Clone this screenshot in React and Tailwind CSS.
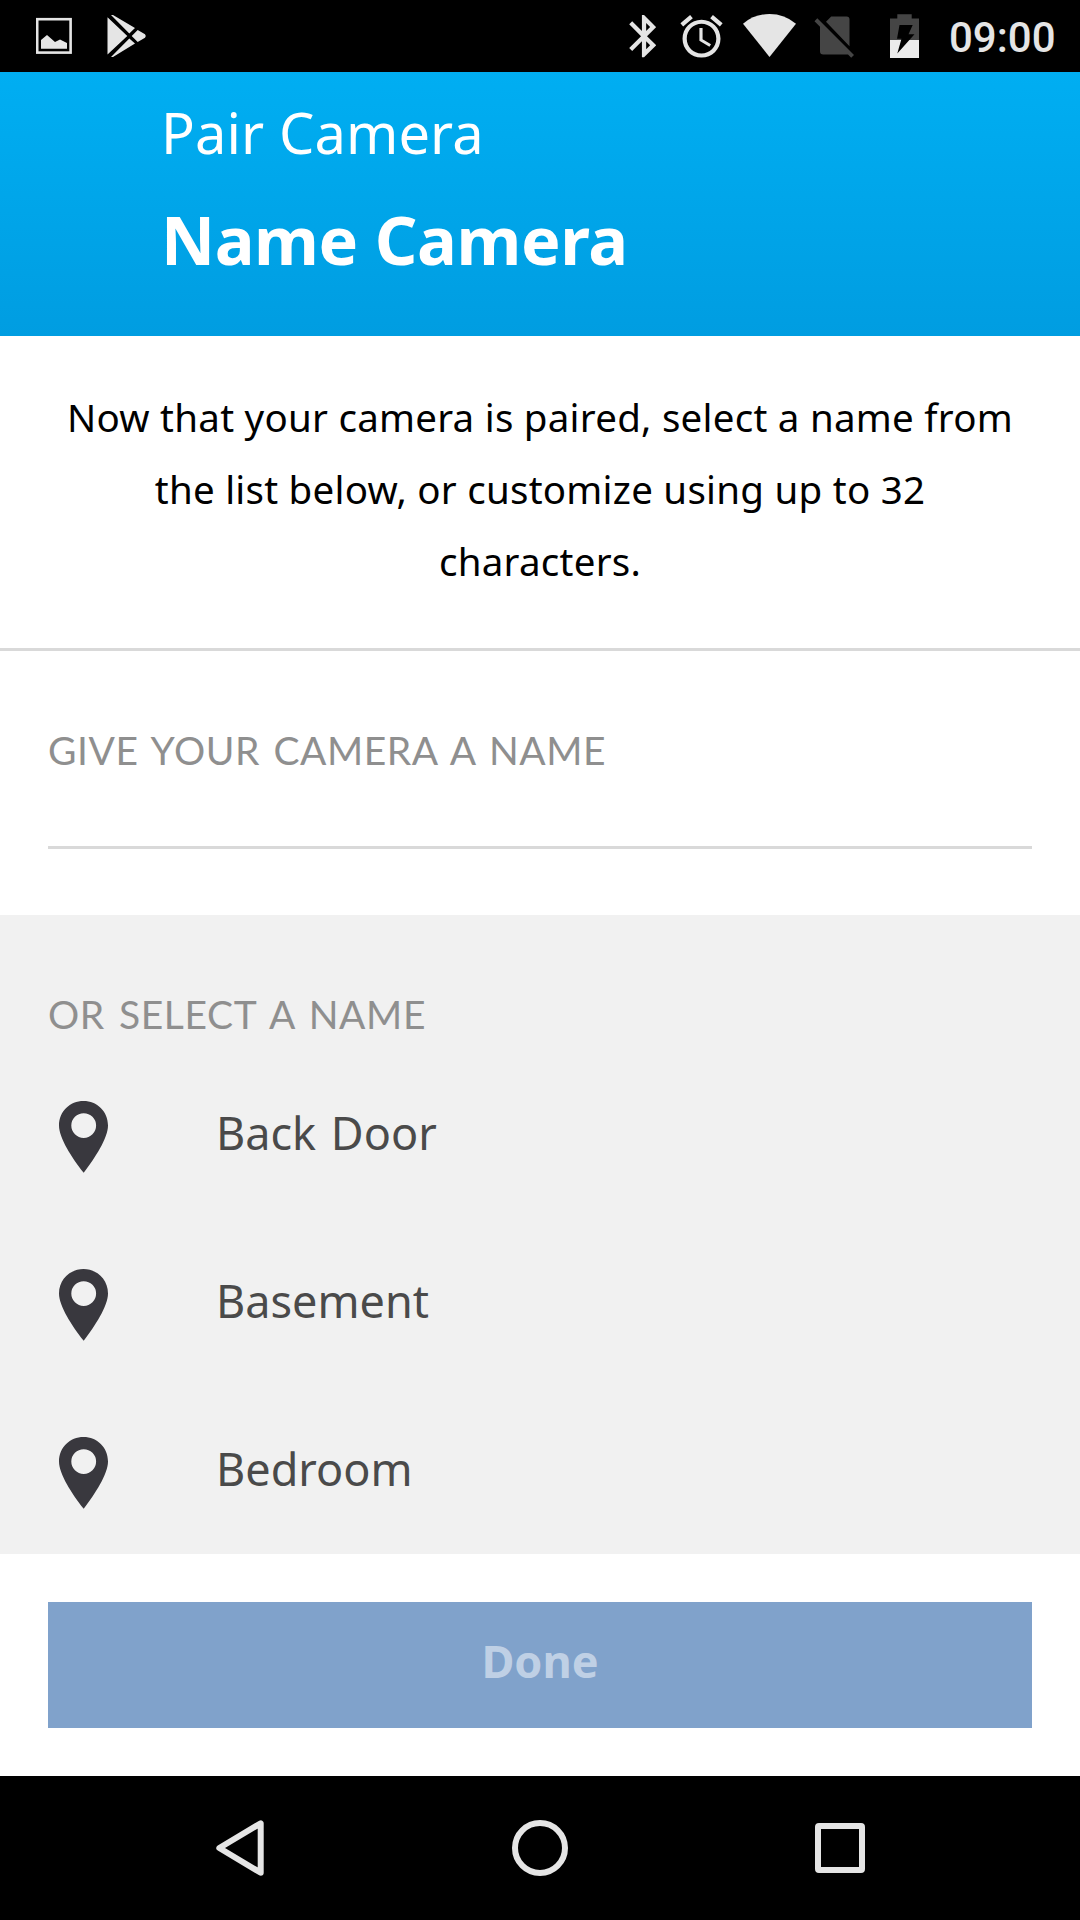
import React from 'react';

const names = ['Back Door', 'Basement', 'Bedroom'];

function StatusBar() {
  return (
    <div className="flex h-[72px] shrink-0 bg-black pl-9 text-[#e5e5e5]">
      {/* Notifications */}
      <svg className="h-[72px] w-9" viewBox="36 0 36 72" fill="currentColor">
        <rect x="37.2" y="19.2" width="33.4" height="33.4" fill="none" stroke="currentColor" strokeWidth="2.6" />
        <path d="M41 40l6-5 8 7 5-2.6 7 3.6v5.7H41z" />
      </svg>
      <svg className="ml-[35px] h-[72px] w-10" viewBox="107 0 40 72" fill="currentColor">
        <path d="M107.5 17.3L127.3 36l-19.8 18.5zM111 15h2l22 13-5.7 5.5zM111 57h2l22-13.5-5.7-5zM137.7 30l7.3 4.2q1.6 1.8 0 3.6l-7.3 4.2-6-6z" />
      </svg>

      {/* System icons */}
      <svg className="ml-[482px] h-[72px] w-[27px]" viewBox="629 0 27 72" fill="currentColor">
        <g transform="translate(618.6 10.7) scale(2.12)">
          <path d="M17.71 7.71L12 2h-1v7.59L6.41 5 5 6.41 10.59 12 5 17.59 6.41 19 11 14.41V22h1l5.71-5.71-4.3-4.29 4.3-4.29zM13 5.83l1.88 1.88L13 9.59V5.83zm1.88 10.46L13 18.17v-3.76l1.88 1.88z" />
        </g>
      </svg>
      <svg className="ml-6 h-[72px] w-[43px]" viewBox="680 0 43 72" fill="currentColor">
        <g transform="translate(676.2 11.2) scale(2.11)">
          <path d="M22 5.72l-4.6-3.86-1.29 1.53 4.6 3.86L22 5.72zM7.88 3.39L6.6 1.86 2 5.71l1.29 1.53 4.59-3.85zM12.5 8H11v6l4.75 2.85.75-1.23-4-2.37V8zM12 4c-4.97 0-9 4.03-9 9s4.02 9 9 9c4.97 0 9-4.03 9-9s-4.03-9-9-9zm0 16c-3.87 0-7-3.13-7-7s3.13-7 7-7 7 3.13 7 7-3.13 7-7 7z" />
        </g>
      </svg>
      <svg className="ml-5 h-[72px] w-[53px]" viewBox="743 0 53 72" fill="currentColor">
        <path d="M743 23.7Q754.5 14 769.5 14T796 23.7L769.5 57z" />
      </svg>
      <svg className="ml-[18px] h-[72px] w-[41px]" viewBox="814 0 41 72" fill="#454545">
        <path d="M826 21.7l5.2-5.2H846.5a3 3 0 0 1 3 3v26.7z" />
        <path d="M817.3 18.2L854 55l-2.8 2.8-3.2-3.3H823.3a3.3 3.3 0 0 1-3.3-3.3V26.8l-5.5-5.5z" />
      </svg>
      <svg className="ml-[35px] h-[72px] w-[29px]" viewBox="890 0 29 72">
        <path d="M890 40V18.6h7.3V14.2h14.4v4.4H919V40z" fill="#454545" />
        <path d="M890 40h29v18h-29z" fill="#ebebeb" />
        <path d="M899.5 25H912.7l-4.2 9.3h6L897.3 53.5l4.2-14.8H897z" fill="#000" />
      </svg>
      <span className="ml-[30px] font-[Roboto,sans-serif] text-[42px] leading-[75px] font-medium">09:00</span>
    </div>
  );
}

function Pin() {
  return (
    <svg className="h-[72px] w-[49px]" viewBox="0 0 49 72" fill="#39383e">
      <path
        fillRule="evenodd"
        d="M24.5 0C38 0 49 10.5 49 24.5C49 37 36 57 24.7 71.8C13 57 0 37 0 24.5C0 10.5 11 0 24.5 0zM24.7 12.200a12.400 12.400 0 1 0 0 24.800a12.400 12.400 0 1 0 0-24.800z"
      />
    </svg>
  );
}

function NavBar() {
  return (
    <div className="flex h-36 shrink-0 items-center bg-black pl-[216px]">
      <svg className="h-14 w-12" viewBox="0 0 48 56" fill="none" stroke="#e5e5e5" strokeWidth="6" strokeLinejoin="round">
        <path d="M44.7 3.3v49.4L3.3 28z" />
      </svg>
      <div className="ml-[248px] size-14 rounded-full border-[6px] border-[#e5e5e5]" />
      <div className="ml-[247px] size-[50px] rounded-[4px] border-[6px] border-[#e5e5e5]" />
    </div>
  );
}

export default function App() {
  return (
    <div className="flex h-[1920px] w-[1080px] flex-col overflow-hidden bg-white font-['Noto_Sans',sans-serif]">
      <StatusBar />

      <header className="flex h-[264px] shrink-0 flex-col gap-[27px] bg-linear-to-b from-[#00aef2] to-[#009de1] pt-6 pl-[161px] text-white">
        <p className="text-[56px] leading-[72px] tracking-[0.1px]">Pair Camera</p>
        <h1 className="text-[66.5px] leading-[88px] font-bold tracking-[-0.4px]">Name Camera</h1>
      </header>

      <p className="h-[315px] shrink-0 border-b-[3px] border-[#d9d9d9] px-[60px] pt-[45px] text-center text-[38.5px] leading-[72px] tracking-[0.25px] text-black">
        Now that your camera is paired, select a name from the list below, or customize using up to 32 characters.
      </p>

      <label className="block h-[264px] shrink-0 px-12 pt-[75px]">
        <span className="block font-[Lato,sans-serif] text-[39px] leading-[48px] tracking-[0.55px] text-[#8f8f8f] [word-spacing:3px]">
          GIVE YOUR CAMERA A NAME
        </span>
        <input className="block h-[75px] w-full border-b-[3px] border-[#d9d9d9] text-[39px] outline-none" maxLength={32} />
      </label>

      {/* Preset names */}
      <section className="h-[639px] shrink-0 overflow-hidden bg-[#f1f1f1] pt-[75px]">
        <h2 className="pl-12 font-[Lato,sans-serif] text-[39px] leading-[48px] tracking-[0.65px] text-[#8f8f8f] [word-spacing:3.3px]">
          OR SELECT A NAME
        </h2>
        <ul className="mt-[15px]">
          {names.map((name) => (
            <li key={name} className="flex h-[168px] items-center gap-[108px] pl-[59px]">
              <Pin />
              <span className="pb-[9px] text-[45px] leading-[60px] text-[#4a4a4a] [word-spacing:3px]">{name}</span>
            </li>
          ))}
        </ul>
      </section>

      <div className="h-[222px] shrink-0 px-12 pt-12">
        <button className="block h-[126px] w-full bg-[#80a2cb] pb-[9px] text-[45px] font-bold text-[#bfd0e5]" disabled>
          Done
        </button>
      </div>

      <NavBar />
    </div>
  );
}
